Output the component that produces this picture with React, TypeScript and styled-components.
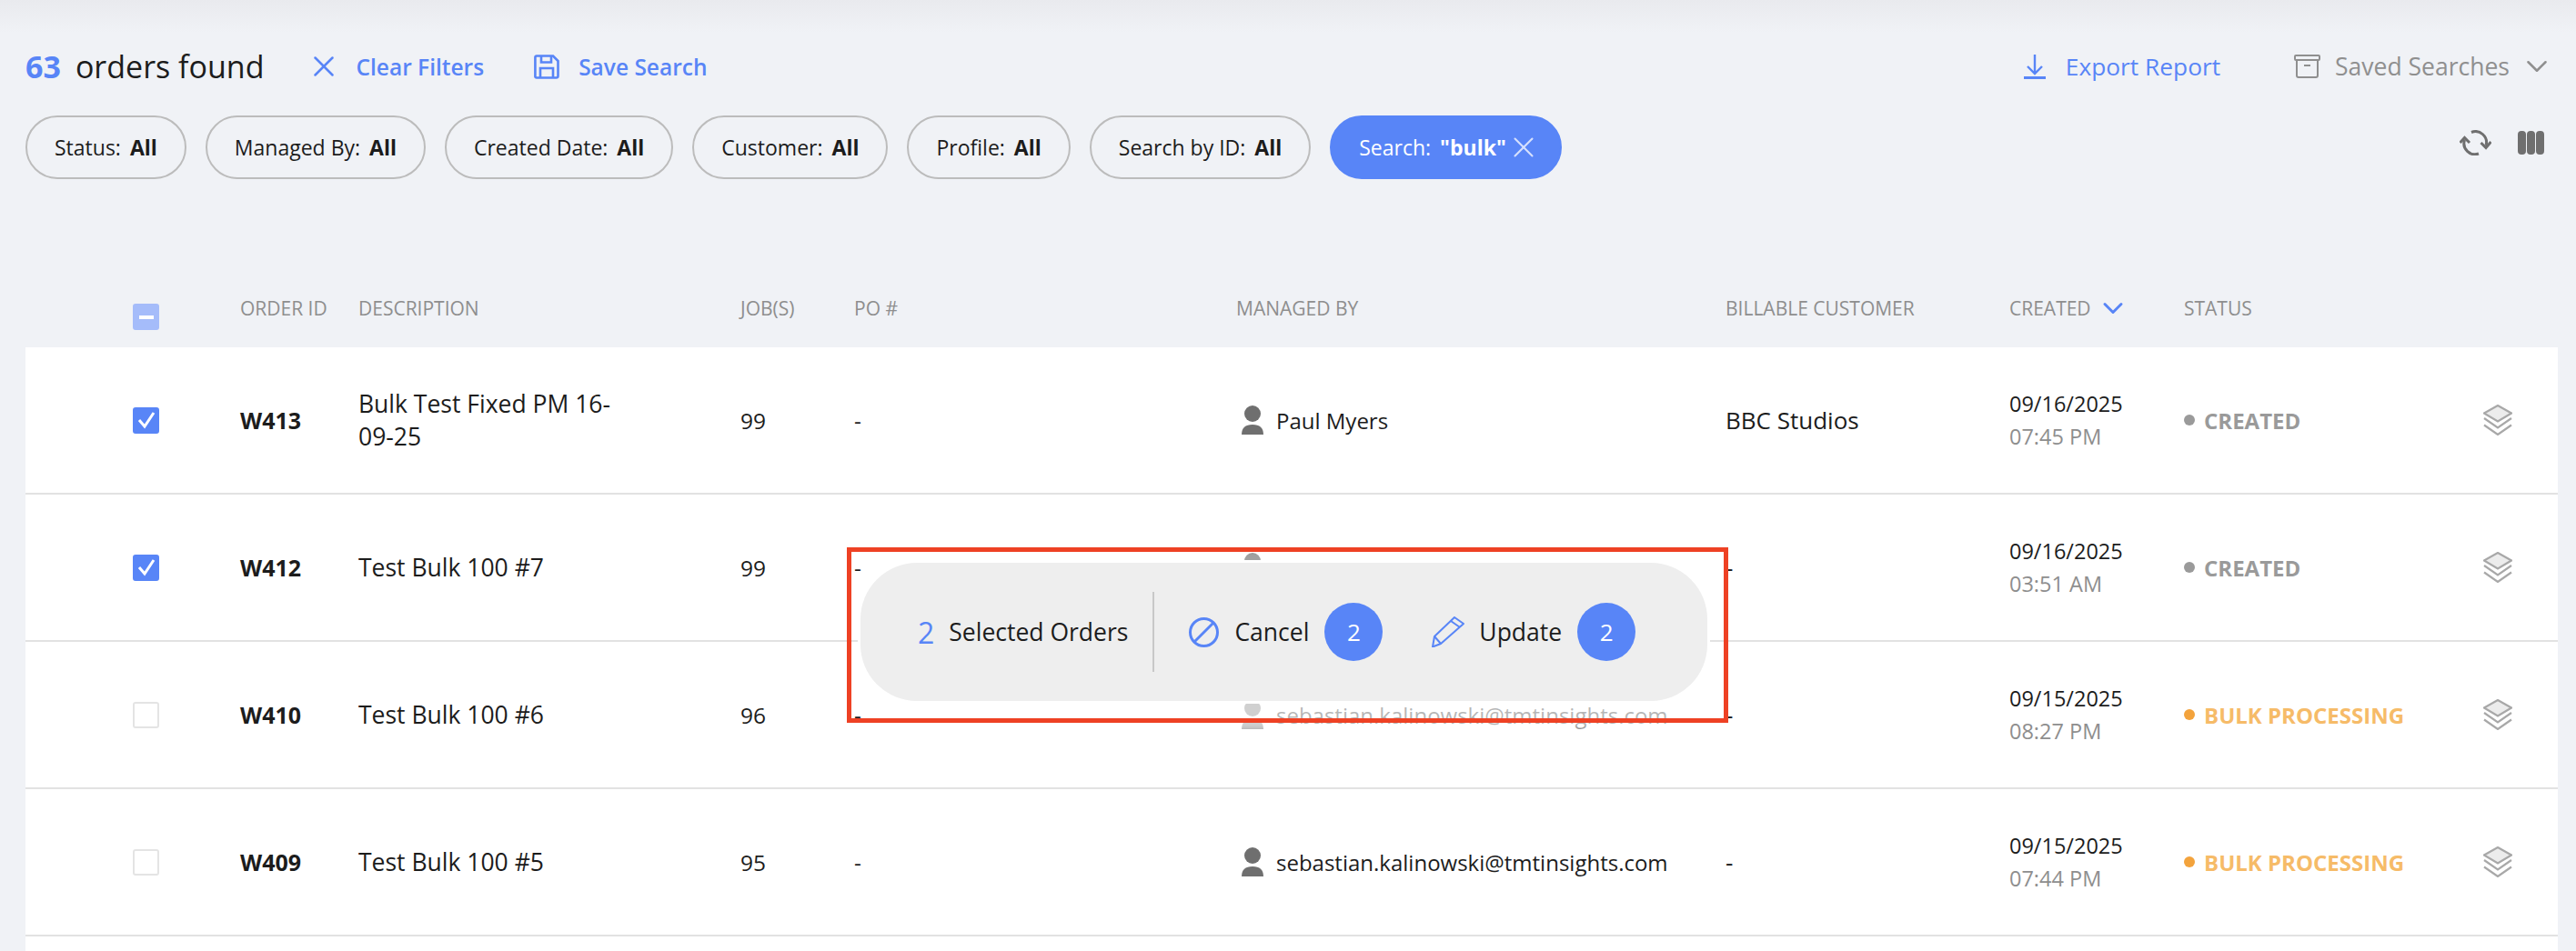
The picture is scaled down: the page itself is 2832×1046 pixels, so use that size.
import React from "react";
import styled, { createGlobalStyle } from "styled-components";
import { X, ChevronDown } from "lucide-react";

const GlobalStyle = createGlobalStyle`
  html, body {
    margin: 0;
    height: 1046px;
    overflow: hidden;
    background: #f0f2f6;
    font-family: "Open Sans", sans-serif;
    color: #1c1c1c;
  }
`;

const BLUE = "#5885f7";

const Page = styled.div`
  position: relative;
  width: 2832px;
  height: 1046px;
  overflow: hidden;
  padding: 0 20px 0 28px;
  box-sizing: border-box;
  background: linear-gradient(#e9eaee 0, #f0f2f6 36px);
`;

const TopBar = styled.div`
  display: flex;
  align-items: center;
  height: 48px;
  padding-top: 49px;
`;

const Count = styled.div`
  font-size: 34px;
  display: flex;
  gap: 16px;
  margin-right: 47px;
  b {
    color: ${BLUE};
    font-weight: 700;
  }
`;

const LinkButton = styled.div<{ $gap: number; $after: number; $size?: number; $bold?: boolean; $muted?: boolean }>`
  display: flex;
  align-items: center;
  gap: ${(p) => p.$gap}px;
  font-size: ${(p) => p.$size ?? 24.5}px;
  font-weight: ${(p) => (p.$bold ? 600 : 400)};
  color: ${(p) => (p.$muted ? "#8f8f8f" : BLUE)};
  margin-right: ${(p) => p.$after}px;
`;

const Spacer = styled.div`
  flex: 1;
`;

const SavedChevron = styled(ChevronDown)`
  margin-left: -5px;
`;

const ChipRow = styled.div`
  display: flex;
  align-items: flex-start;
  gap: 21px;
  margin-top: 30px;
  height: 70px;
`;

const Chip = styled.div<{ $active?: boolean }>`
  height: 70px;
  box-sizing: border-box;
  display: flex;
  align-items: center;
  padding: 0 30px;
  gap: 10px;
  border-radius: 35px;
  font-size: 23px;
  border: 2px solid ${(p) => (p.$active ? BLUE : "#bcbcbc")};
  background: ${(p) => (p.$active ? BLUE : "transparent")};
  color: ${(p) => (p.$active ? "#fff" : "#1c1c1c")};
  b {
    font-weight: 700;
  }
`;

const ChipClose = styled(X)`
  margin: 0 -9px 0 -10px;
`;

const ToolIcons = styled.div`
  display: flex;
  align-items: center;
  gap: 29px;
  margin-left: auto;
  margin-top: 16px;
  margin-right: 15px;
`;

const Grid = "118px 130px 420px 125px 420px 538px 312px 192px 1fr";

const HeaderRow = styled.div`
  display: grid;
  grid-template-columns: ${Grid};
  height: 66px;
  margin-top: 119px;
  padding-left: 118px;
  font-size: 21px;
  color: #8e8e8e;
  align-items: start;
  span {
    display: flex;
    align-items: center;
    gap: 6px;
    margin-top: 9px;
  }
`;

const SortIcon = styled(ChevronDown)`
  margin: -8px 0;
`;

const Row = styled.div`
  display: grid;
  grid-template-columns: ${Grid};
  height: 160px;
  padding-left: 118px;
  background: #fff;
  border-bottom: 2px solid #e2e2e2;
  align-items: center;
  font-size: 24.5px;
`;

const Check = styled.div<{ $state?: "on" | "off" | "partial" }>`
  width: 29px;
  height: 29px;
  box-sizing: border-box;
  border-radius: 3px;
  display: flex;
  align-items: center;
  justify-content: center;
  border: 2px solid ${(p) =>
    p.$state === "on" ? BLUE : p.$state === "partial" ? "#a5bcfa" : "#e4e4e4"};
  background: ${(p) =>
    p.$state === "on" ? BLUE : p.$state === "partial" ? "#a5bcfa" : "#fff"};
`;

const HeaderCheck = styled(Check)`
  margin-top: 18px;
`;

const Minus = styled.div`
  width: 16px;
  height: 4px;
  background: #fff;
`;

const OrderId = styled.div`
  font-size: 25px;
  font-weight: 700;
`;

const Description = styled.div`
  width: 290px;
  font-size: 26.5px;
  line-height: 36px;
`;

const Person = styled.div`
  display: flex;
  align-items: center;
  gap: 14px;
  padding-left: 6px;
  font-size: 24px;
  color: #6f6f6f;
  span {
    color: #1c1c1c;
  }
`;

const Customer = styled.div`
  font-size: 26px;
  font-weight: 500;
`;

const DateCell = styled.div`
  font-size: 23.5px;
  line-height: 36px;
`;

const Time = styled.div`
  color: #8e8e8e;
`;

const Status = styled.div<{ $color: string; $dot: string }>`
  display: flex;
  align-items: center;
  gap: 10px;
  font-size: 24px;
  font-weight: 700;
  color: ${(p) => p.$color};
  &::before {
    content: "";
    width: 12px;
    height: 12px;
    border-radius: 50%;
    background: ${(p) => p.$dot};
  }
`;

const StatusCell = styled.div`
  display: flex;
  align-items: center;
  justify-content: space-between;
  padding-right: 50px;
`;

const Highlight = styled.div`
  position: absolute;
  left: 931px;
  top: 602px;
  width: 969px;
  height: 193px;
  box-sizing: border-box;
  border: 5px solid #ee4124;
  pointer-events: none;
`;

const ActionPill = styled.div`
  position: absolute;
  left: 946px;
  top: 619px;
  width: 931px;
  height: 152px;
  box-sizing: border-box;
  display: flex;
  align-items: center;
  padding-left: 63px;
  background: #eeeeee;
  border-radius: 62px;
  box-shadow: 0 0 0 3px #fff, 0 40px 8px -6px rgba(255, 255, 255, 0.68),
    0 -20px 6px -6px rgba(255, 255, 255, 0.35);
  font-size: 26.5px;
`;

const PillCount = styled.span`
  color: ${BLUE};
  font-size: 32px;
  margin-right: 16px;
`;

const Divider = styled.div`
  width: 2px;
  height: 88px;
  background: #c8c8c8;
  margin: 0 38px 0 27px;
`;

const PillAction = styled.div`
  display: flex;
  align-items: center;
  margin-right: 54px;
`;

const PillLabel = styled.span<{ $gap: number }>`
  margin: 0 17px 0 ${(p) => p.$gap}px;
`;

const Badge = styled.div`
  width: 64px;
  height: 64px;
  border-radius: 50%;
  background: ${BLUE};
  color: #fff;
  display: flex;
  align-items: center;
  justify-content: center;
  font-size: 26px;
`;

const SaveIcon = () => (
  <svg width="28" height="27" viewBox="0 0 28 27" fill="none" stroke={BLUE} strokeWidth="2.6">
    <path d="M3 1.500h18l5.500 5.500v16.500a2 2 0 0 1-2 2H3a1.600 1.600 0 0 1-1.600-2V3a1.600 1.600 0 0 1 1.600-1.500z" />
    <path d="M8 1.500v7h11v-7M7 25.500V15h14v10.500" />
  </svg>
);

const ExportIcon = () => (
  <svg width="24" height="27" viewBox="0 0 24 27" fill="none" stroke={BLUE} strokeWidth="2.4">
    <path d="M12 0v20M4 13l8 8 8-8" />
    <path d="M0 25.500h24" strokeWidth="3" />
  </svg>
);

const ArchiveIcon = () => (
  <svg width="29" height="26" viewBox="0 0 29 26" fill="none" stroke="#8f8f8f" strokeWidth="2">
    <rect x="1" y="1" width="27" height="5" rx="1" />
    <path d="M3 6v17a2 2 0 0 0 2 2h19a2 2 0 0 0 2-2V6M11 12h7" />
  </svg>
);

const RefreshIcon = () => (
  <svg width="35" height="28" viewBox="0 0 35 28" fill="none" stroke="#6f6f6f" strokeWidth="3">
    <path d="M13 2.500A12 12 0 0 1 29 17" />
    <path d="M21 26A12 12 0 0 1 5.500 11" />
    <path d="M23.500 14l5.500 5.500L34.500 13" strokeWidth="3" />
    <path d="M0.500 14L5.500 8.500 11 14" strokeWidth="3" />
  </svg>
);

const ColumnsIcon = () => (
  <svg width="29" height="26" viewBox="0 0 29 26" fill="#6f6f6f">
    <rect x="0" y="0" width="9" height="26" rx="4" />
    <rect x="10" y="0" width="9" height="26" rx="4" />
    <rect x="20" y="0" width="9" height="26" rx="4" />
  </svg>
);

const LayersIcon = () => (
  <svg width="32" height="34" viewBox="0 0 32 34" fill="none" stroke="#a8a8a8" strokeWidth="2.200">
    <path d="M16 1l15 8.500-15 9-15-9z" fill="#ececec" />
    <path d="M1 15l15 10.500L31 15M1 22.500L16 33l15-10.500" />
  </svg>
);

const PersonIcon = () => (
  <svg width="24" height="32" viewBox="0 0 24 32" fill="currentColor">
    <circle cx="12" cy="9" r="9" />
    <path d="M0 32Q0 21 12 21T24 32z" />
  </svg>
);

const BanIcon = () => (
  <svg width="33" height="33" viewBox="0 0 33 33" fill="none" stroke={BLUE} strokeWidth="3">
    <circle cx="16.500" cy="16.500" r="15" />
    <path d="M6 27L27 6" />
  </svg>
);

const PencilIcon = () => (
  <svg width="36" height="34" viewBox="0 0 36 34" fill="none" stroke={BLUE} strokeWidth="2">
    <path d="M1 33.500L3 22 25 1l10 7-25 22z" strokeLinejoin="round" />
    <path d="M21 5l10 7M3 22l7 8" />
  </svg>
);

const CheckMark = () => (
  <svg width="22" height="22" viewBox="0 0 22 22" fill="none" stroke="#fff" strokeWidth="3">
    <path d="M3 11l6 7L19 3" />
  </svg>
);

type Order = {
  id: string;
  description: string;
  jobs: string;
  manager: string;
  customer: string;
  date: string;
  time: string;
  status: string;
  checked: boolean;
};

const orders: Order[] = [
  { id: "W413", description: "Bulk Test Fixed PM 16-09-25", jobs: "99", manager: "Paul Myers", customer: "BBC Studios", date: "09/16/2025", time: "07:45 PM", status: "CREATED", checked: true },
  { id: "W412", description: "Test Bulk 100 #7", jobs: "99", manager: "sebastian.kalinowski@tmtinsights.com", customer: "-", date: "09/16/2025", time: "03:51 AM", status: "CREATED", checked: true },
  { id: "W410", description: "Test Bulk 100 #6", jobs: "96", manager: "sebastian.kalinowski@tmtinsights.com", customer: "-", date: "09/15/2025", time: "08:27 PM", status: "BULK PROCESSING", checked: false },
  { id: "W409", description: "Test Bulk 100 #5", jobs: "95", manager: "sebastian.kalinowski@tmtinsights.com", customer: "-", date: "09/15/2025", time: "07:44 PM", status: "BULK PROCESSING", checked: false },
];

const filters = ["Status", "Managed By", "Created Date", "Customer", "Profile", "Search by ID"];

export default function App() {
  return (
    <Page>
      <GlobalStyle />
      <TopBar>
        <Count>
          <b>63</b> orders found
        </Count>
        <LinkButton $bold $gap={16} $after={55}>
          <X size={38} strokeWidth={1.6} /> Clear Filters
        </LinkButton>
        <LinkButton $bold $gap={21} $after={0}>
          <SaveIcon /> Save Search
        </LinkButton>
        <Spacer />
        <LinkButton $gap={22} $after={81} $size={26.3}>
          <ExportIcon /> Export Report
        </LinkButton>
        <LinkButton $muted $gap={16} $after={4} $size={26.5}>
          <ArchiveIcon /> Saved Searches <SavedChevron size={38} strokeWidth={1.6} />
        </LinkButton>
      </TopBar>
      <ChipRow>
        {filters.map((f) => (
          <Chip key={f}>
            {f}: <b>All</b>
          </Chip>
        ))}
        <Chip $active>
          Search: <b>"bulk"</b> <ChipClose size={38} strokeWidth={1.3} color="#d6e0fd" />
        </Chip>
        <ToolIcons>
          <RefreshIcon />
          <ColumnsIcon />
        </ToolIcons>
      </ChipRow>
      <HeaderRow>
        <HeaderCheck $state="partial">
          <Minus />
        </HeaderCheck>
        <span>ORDER ID</span>
        <span>DESCRIPTION</span>
        <span>JOB(S)</span>
        <span>PO #</span>
        <span>MANAGED BY</span>
        <span>BILLABLE CUSTOMER</span>
        <span>
          CREATED <SortIcon size={36} color={BLUE} strokeWidth={2} />
        </span>
        <span>STATUS</span>
      </HeaderRow>
      {orders.map((o) => {
        const bulk = o.status !== "CREATED";
        return (
          <Row key={o.id}>
            <Check $state={o.checked ? "on" : "off"}>{o.checked && <CheckMark />}</Check>
            <OrderId>{o.id}</OrderId>
            <Description>{o.description}</Description>
            <div>{o.jobs}</div>
            <div>-</div>
            <Person>
              <PersonIcon />
              <span>{o.manager}</span>
            </Person>
            <Customer>{o.customer}</Customer>
            <DateCell>
              {o.date}
              <Time>{o.time}</Time>
            </DateCell>
            <StatusCell>
              <Status $color={bulk ? "#f6bb68" : "#9a9a9a"} $dot={bulk ? "#f3a33c" : "#9a9a9a"}>
                {o.status}
              </Status>
              <LayersIcon />
            </StatusCell>
          </Row>
        );
      })}
      <Row />
      <ActionPill>
        <PillCount>2</PillCount>
        Selected Orders
        <Divider />
        <PillAction>
          <BanIcon />
          <PillLabel $gap={17}>Cancel</PillLabel>
          <Badge>2</Badge>
        </PillAction>
        <PillAction>
          <PencilIcon />
          <PillLabel $gap={16}>Update</PillLabel>
          <Badge>2</Badge>
        </PillAction>
      </ActionPill>
      <Highlight />
    </Page>
  );
}
